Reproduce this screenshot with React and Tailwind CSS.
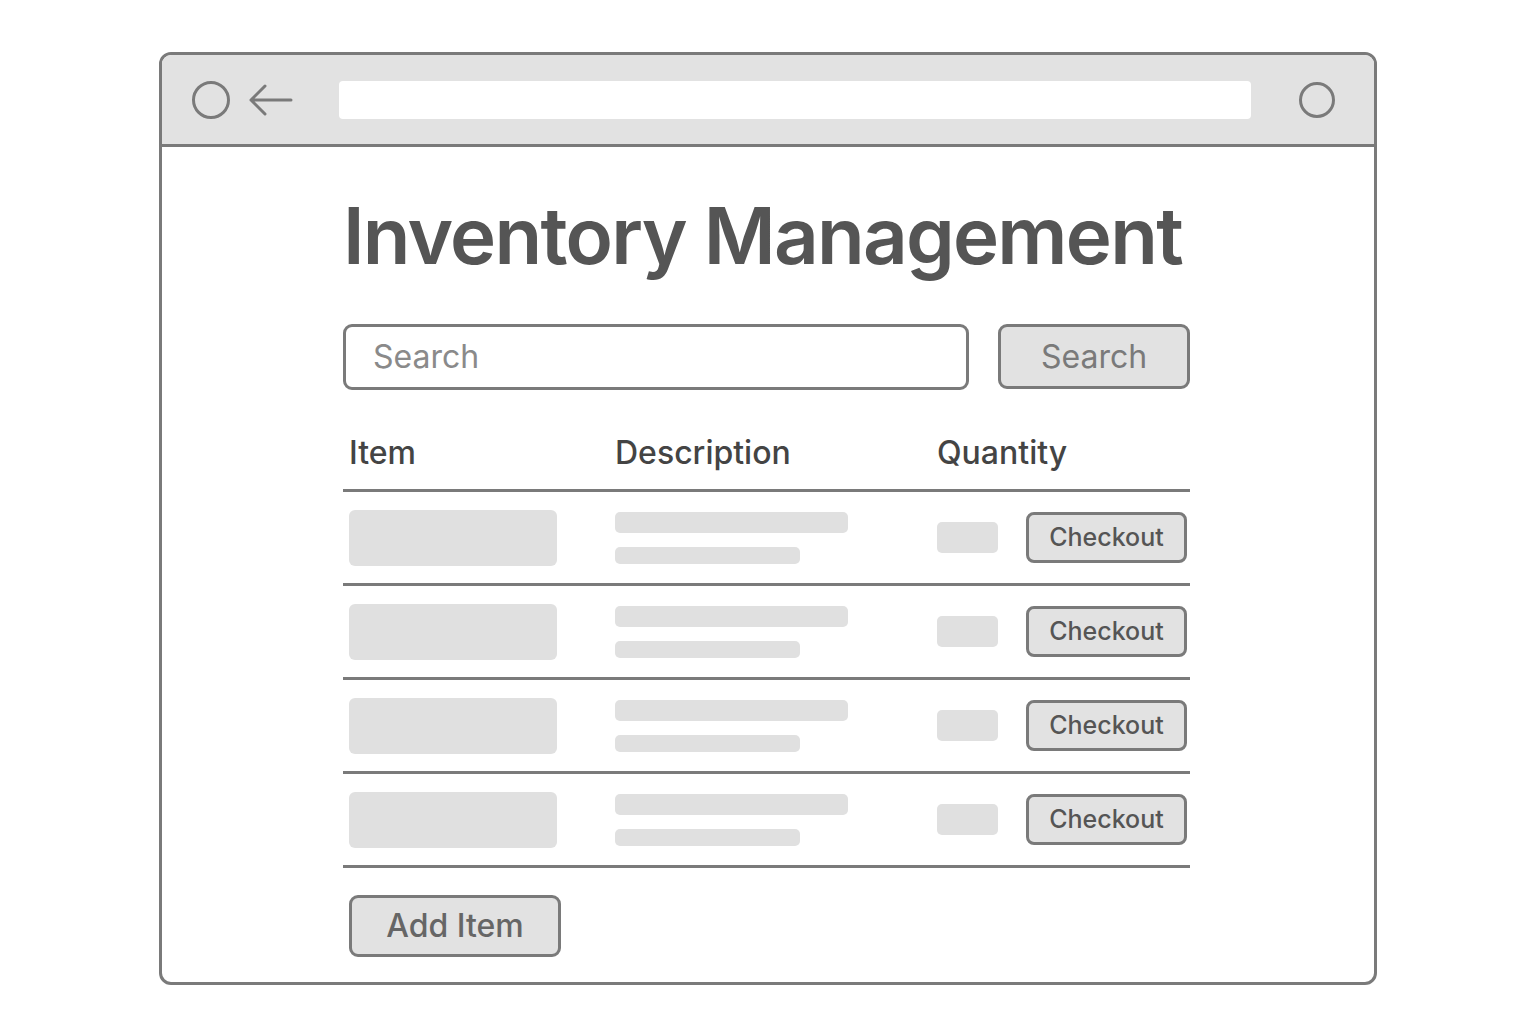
import React from 'react';

const rows = [1, 2, 3, 4];

const App = () => {
  return (
    <div className="min-h-screen bg-white pt-[52px]" style={{ fontFamily: 'Inter, "Noto Sans", sans-serif' }}>
      <div className="mx-auto w-[1218px] h-[933px] rounded-[12px] border-[3px] border-[#7a7a7a] overflow-hidden flex flex-col">
        {/* browser bar */}
        <div className="h-[92px] shrink-0 bg-[#e2e2e2] border-b-[3px] border-[#7a7a7a] flex items-center pl-[29px] pr-[38px]">
          <svg width="40" height="40" viewBox="0 0 40 40" className="shrink-0">
            <circle cx="20" cy="20" r="17.5" fill="none" stroke="#7a7a7a" strokeWidth="3" />
          </svg>
          <svg width="48" height="36" viewBox="0 0 48 36" className="ml-[16px] shrink-0">
            <path d="M44 18 H4 M18 4 L4 18 L18 32" fill="none" stroke="#7a7a7a" strokeWidth="3" strokeLinecap="round" strokeLinejoin="round" />
          </svg>
          <div className="ml-[44px] w-[912px] h-[38px] bg-white rounded-[4px]" />
          <div className="flex-1" />
          <svg width="38" height="38" viewBox="0 0 38 38" className="shrink-0">
            <circle cx="19" cy="19" r="16.5" fill="none" stroke="#7a7a7a" strokeWidth="3" />
          </svg>
        </div>

        {/* content */}
        <div className="pl-[181px] w-[1028px]">
          <h1 className="mt-[49px] text-[78px] leading-[80px] font-semibold text-[#555555] tracking-[-1.75px] whitespace-nowrap">
            Inventory Management
          </h1>

          <div className="mt-[48px] flex h-[66px]">
            <div className="w-[626px] h-[66px] border-[3px] border-[#7a7a7a] rounded-[9px] flex items-center pl-[27px] text-[32px] text-[#8a8a8a]">
              Search
            </div>
            <button className="ml-[29px] w-[192px] h-[65px] bg-[#e2e2e2] border-[3px] border-[#7a7a7a] rounded-[9px] text-[32px] text-[#7a7a7a]">
              Search
            </button>
          </div>

          <div className="mt-[27px] w-[847px] h-[75px] border-b-[3px] border-[#7a7a7a] grid grid-cols-[266px_322px_1fr] items-center pl-[6px] text-[32px] font-medium text-[#444444]">
            <div>Item</div>
            <div>Description</div>
            <div>Quantity</div>
          </div>

          {rows.map((r) => (
            <div key={r} className="w-[847px] h-[94px] border-b-[3px] border-[#7a7a7a] grid grid-cols-[266px_322px_1fr] items-center pl-[6px]">
              <div className="w-[208px] h-[56px] bg-[#e0e0e0] rounded-[6px]" />
              <div className="flex flex-col gap-[14px]">
                <div className="w-[233px] h-[21px] bg-[#e0e0e0] rounded-[5px]" />
                <div className="w-[185px] h-[17px] bg-[#e0e0e0] rounded-[5px]" />
              </div>
              <div className="flex items-center">
                <div className="w-[61px] h-[31px] bg-[#e0e0e0] rounded-[5px]" />
                <button className="ml-[28px] w-[161px] h-[51px] bg-[#e2e2e2] border-[3px] border-[#7a7a7a] rounded-[8px] text-[25px] font-medium text-[#555555]">
                  Checkout
                </button>
              </div>
            </div>
          ))}

          <button className="mt-[27px] ml-[6px] w-[212px] h-[62px] bg-[#e2e2e2] border-[3px] border-[#7a7a7a] rounded-[9px] text-[32px] font-medium text-[#666666]">
            Add Item
          </button>
        </div>
      </div>
    </div>
  );
};

export default App;
